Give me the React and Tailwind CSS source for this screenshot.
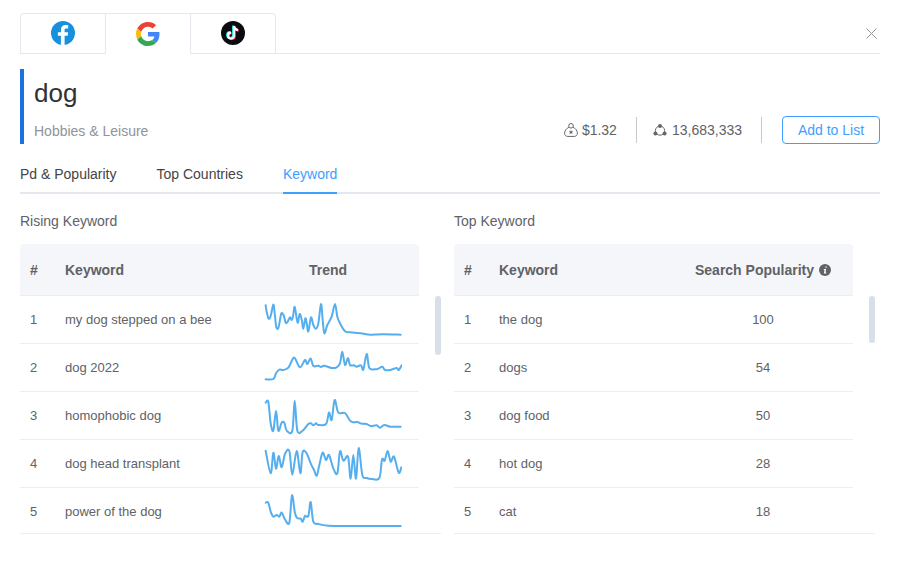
const font = { fontFamily: '"Liberation Sans", Arial, sans-serif' };

const rising = [
  {
    name: "my dog stepped on a bee",
    view: "36 30 420 120",
    points:
      "47,46 50,65 56,86 62,78 70,44 74,70 79,112 85,114 90,90 94,70 101,76 107,98 113,95 120,82 125,90 129,80 134,50 140,85 144,98 149,72 155,88 160,116 166,85 170,100 175,124 183,82 190,105 198,116 205,100 213,42 218,90 223,130 232,105 245,80 255,42 262,80 270,100 285,124 300,127 340,131 360,134 400,133 452,134",
  },
  {
    name: "dog 2022",
    view: "36 174 420 120",
    points:
      "47,268 70,267 78,250 88,239 100,240 115,233 128,207 135,205 150,232 165,210 172,222 182,205 190,228 205,227 213,231 222,227 245,234 260,232 270,220 277,186 285,225 294,204 300,225 312,226 320,230 333,226 340,239 350,192 358,234 375,238 385,236 397,230 405,240 420,240 440,234 446,240 455,226",
  },
  {
    name: "homophobic dog",
    view: "36 18 420 120",
    points:
      "47,38 55,36 62,100 70,122 78,62 85,122 95,98 103,98 110,122 127,122 134,32 142,122 158,122 175,102 183,100 190,106 198,100 205,105 228,102 237,68 245,90 254,30 265,68 285,69 300,92 310,97 322,96 335,101 350,102 362,108 380,106 390,113 403,105 420,110 440,110 452,110",
  },
  {
    name: "dog head transplant",
    view: "36 162 420 120",
    points:
      "47,182 62,250 70,188 78,236 86,198 95,232 105,192 118,183 127,254 140,183 151,250 158,186 170,190 182,220 192,240 200,257 208,225 218,188 228,210 237,195 250,235 262,250 270,184 280,212 294,200 302,266 310,195 318,266 326,174 337,255 350,264 365,267 388,264 396,208 404,212 413,183 422,215 432,200 446,248 454,232",
  },
  {
    name: "power of the dog",
    view: "36 306 420 120",
    points:
      "47,338 55,338 62,365 70,380 80,375 88,380 95,368 105,388 118,398 126,316 135,370 142,384 152,386 158,395 165,378 175,378 182,336 190,395 205,402 235,407 300,408 360,408 452,408",
  },
];

const top = [
  { name: "the dog", value: 100 },
  { name: "dogs", value: 54 },
  { name: "dog food", value: 50 },
  { name: "hot dog", value: 28 },
  { name: "cat", value: 18 },
];

// turns the traced points into a smooth line
const smoothPath = (points) => {
  const p = points.split(" ").map((s) => s.split(",").map(Number));
  let d = `M${p[0][0]} ${p[0][1]}`;
  for (let i = 0; i < p.length - 1; i++) {
    const a = p[Math.max(i - 1, 0)];
    const b = p[i];
    const c = p[i + 1];
    const e = p[Math.min(i + 2, p.length - 1)];
    const k = 6;
    d += `C${b[0] + (c[0] - a[0]) / k} ${b[1] + (c[1] - a[1]) / k} ${c[0] - (e[0] - b[0]) / k} ${c[1] - (e[1] - b[1]) / k} ${c[0]} ${c[1]}`;
  }
  return d;
};

const FacebookIcon = () => (
  <svg width="24" height="24" viewBox="0 0 24 24">
    <circle cx="12" cy="12" r="12" fill="#1791de" />
    <path
      d="M13.6 24v-9.2h3l.5-3.5h-3.5V9.2c0-1 .4-1.7 1.8-1.7h1.8V4.3c-.6-.1-1.6-.2-2.6-.2-2.8 0-4.6 1.6-4.6 4.6v2.6H6.9v3.5H9.9V24z"
      fill="#fff"
    />
  </svg>
);

const GoogleIcon = () => (
  <svg width="24" height="24" viewBox="0 0 48 48">
    <path fill="#EA4335" d="M24 9.5c3.54 0 6.71 1.22 9.21 3.6l6.85-6.85C35.9 2.38 30.47 0 24 0 14.62 0 6.51 5.38 2.56 13.22l7.98 6.19C12.43 13.72 17.74 9.5 24 9.5z" />
    <path fill="#4285F4" d="M46.98 24.55c0-1.57-.15-3.09-.38-4.55H24v9.02h12.94c-.58 2.96-2.26 5.48-4.78 7.18l7.73 6c4.51-4.18 7.09-10.36 7.09-17.65z" />
    <path fill="#FBBC05" d="M10.53 28.59c-.48-1.45-.76-2.99-.76-4.59s.27-3.14.76-4.59l-7.98-6.19C.92 16.46 0 20.12 0 24c0 3.88.92 7.54 2.56 10.78l7.97-6.19z" />
    <path fill="#34A853" d="M24 48c6.48 0 11.93-2.13 15.89-5.81l-7.73-6c-2.15 1.45-4.92 2.3-8.16 2.3-6.26 0-11.57-4.22-13.47-9.91l-7.98 6.19C6.51 42.62 14.62 48 24 48z" />
  </svg>
);

const note = "M13 5v9.6a3 3 0 1 1-3-3M13 5.2c.3 2.2 1.8 3.7 4 4";

const TiktokIcon = () => (
  <svg width="24" height="24" viewBox="0 0 24 24" fill="none" strokeWidth="2.2">
    <circle cx="12" cy="12" r="12" fill="#0b0b12" />
    <path d={note} stroke="#25f4ee" transform="translate(-.8 -.5)" />
    <path d={note} stroke="#fe2c55" transform="translate(.8 .5)" />
    <path d={note} stroke="#fff" />
  </svg>
);

const BagIcon = () => (
  <svg width="14" height="14" viewBox="0 0 14 14" fill="none" stroke="#666" strokeWidth="1">
    <circle cx="7" cy="2.8" r="2.3" />
    <path d="M4.9 4.2C2.6 5.4.6 7.6.6 10.2c0 2 1.3 3.2 3.2 3.2h6.4c1.9 0 3.2-1.2 3.2-3.2 0-2.6-2-4.8-4.3-6" />
    <path d="M7 7.4v3.6M5.4 8.3l3.2 1.8M8.6 8.3l-3.2 1.8" />
  </svg>
);

const CircleIcon = () => (
  <svg width="14" height="14" viewBox="0 0 14 14" fill="none" stroke="#666" strokeWidth="1">
    <circle cx="7" cy="7.6" r="4.6" />
    <circle cx="7" cy="3" r="2" fill="#666" stroke="none" />
    <circle cx="2.4" cy="10.6" r="2" fill="#666" stroke="none" />
    <circle cx="11.6" cy="10.6" r="2" fill="#666" stroke="none" />
  </svg>
);

const Sparkline = ({ view, points }) => (
  <svg width="140" height="40" viewBox={view} fill="none">
    <path
      d={smoothPath(points)}
      stroke="#55aeee"
      strokeWidth="6"
      strokeLinejoin="round"
      strokeLinecap="round"
    />
  </svg>
);

const RowList = ({ rows, cols, renderLast }) => (
  <div className="w-[399px]">
    {rows.map((row, i) => (
      <div
        key={row.name}
        className={`grid h-[48px] ${cols} items-center border-b border-[#ebeef5] text-[13px] text-[#606266]`}
      >
        <span className="pl-[10px]">{i + 1}</span>
        <span>{row.name}</span>
        {renderLast(row)}
      </div>
    ))}
  </div>
);

const App = () => {
  return (
    <div className="h-[586px] w-[897px] overflow-hidden bg-white pl-[20px] pr-[17px] pt-[13px]" style={font}>
      <div className="flex h-[41px] w-[860px] items-center justify-between border-b border-[#e4e7ed]">
        <div className="flex h-[41px]">
          <div className="flex h-[41px] w-[86px] items-center justify-center rounded-tl border border-[#e4e7ed]">
            <FacebookIcon />
          </div>
          <div className="-ml-px flex h-[41px] w-[86px] items-center justify-center border border-b-0 border-[#e4e7ed] bg-white">
            <GoogleIcon />
          </div>
          <div className="-ml-px flex h-[41px] w-[86px] items-center justify-center rounded-tr border border-[#e4e7ed]">
            <TiktokIcon />
          </div>
        </div>
        <svg className="mr-[3px]" width="11" height="11" viewBox="0 0 11 11" stroke="#909399" strokeWidth="1">
          <path d="M.5.5l10 10M10.5.5l-10 10" />
        </svg>
      </div>

      <div className="mt-[15px] flex h-[75px] w-[860px] items-end justify-between">
        <div className="h-[75px] border-l-4 border-[#1a73e0] pl-[10px]">
          <div className="mt-[6px] text-[26px] leading-[36px] text-[#303133]">dog</div>
          <div className="mt-[11px] text-[14px] leading-[18px] text-[#909399]">Hobbies &amp; Leisure</div>
        </div>
        <div className="flex h-[28px] items-center text-[14px] text-[#606266]">
          <BagIcon />
          <span className="ml-[4px]">$1.32</span>
          <span className="ml-[19px] mr-[16px] h-[26px] w-px bg-[#c8c9cc]"></span>
          <CircleIcon />
          <span className="ml-[5px]">13,683,333</span>
          <span className="ml-[19px] mr-[20px] h-[26px] w-px bg-[#c8c9cc]"></span>
          <button className="box-border h-[28px] w-[98px] rounded border border-[#409eff] pt-px text-[14px] text-[#409eff]">
            Add to List
          </button>
        </div>
      </div>

      <div className="mt-[10px] box-border flex h-[40px] w-[860px] border-b-2 border-[#e4e7ed] text-[14px] text-[#444]">
        <div className="flex h-[38px] items-center pt-[2px]">Pd &amp; Popularity</div>
        <div className="ml-[40px] flex h-[38px] items-center pt-[2px]">Top Countries</div>
        <div className="ml-[40px] box-content flex h-[38px] items-center border-b-2 border-[#409eff] text-[#409eff]">
          <span className="pt-[2px]">Keyword</span>
        </div>
      </div>

      <div className="mt-[17px] flex gap-[13px]">
        <div className="w-[421px]">
          <div className="h-[20px] text-[14px] leading-[20px] text-[#606266]">Rising Keyword</div>
          <div className="relative mt-[13px] h-[290px] overflow-hidden border-b border-[#ebeef5]">
            <div className="grid h-[52px] w-[399px] grid-cols-[45px_172px_182px] items-center rounded-t border-b border-[#ebeef5] bg-[#f5f6fa] pt-[2px] text-[14px] font-bold text-[#606266]">
              <span className="pl-[10px]">#</span>
              <span>Keyword</span>
              <span className="text-center">Trend</span>
            </div>
            <RowList
              rows={rising}
              cols="grid-cols-[45px_172px_182px]"
              renderLast={(row) => (
                <div className="pl-[25px]">
                  <Sparkline view={row.view} points={row.points} />
                </div>
              )}
            />
            <div className="absolute right-0 top-[52px] h-[59px] w-[6px] rounded-[3px] bg-[#d9dfe9]"></div>
          </div>
        </div>
        <div className="w-[421px]">
          <div className="h-[20px] text-[14px] leading-[20px] text-[#606266]">Top Keyword</div>
          <div className="relative mt-[13px] h-[290px] overflow-hidden border-b border-[#ebeef5]">
            <div className="grid h-[52px] w-[399px] grid-cols-[45px_174px_180px] items-center rounded-t border-b border-[#ebeef5] bg-[#f5f6fa] pt-[2px] text-[14px] font-bold text-[#606266]">
              <span className="pl-[10px]">#</span>
              <span>Keyword</span>
              <span className="flex items-center justify-center gap-[5px]">
                Search Popularity
                <svg className="-mt-[2px]" width="12" height="12" viewBox="0 0 13 13">
                  <circle cx="6.5" cy="6.5" r="6.5" fill="#606266" />
                  <path d="M6.9 2.6h1.4v1.5H6.9zM5.2 5.4h2.6L7 9.3h.9v1.1H5.2l.8-3.9h-.8z" fill="#fff" />
                </svg>
              </span>
            </div>
            <RowList
              rows={top}
              cols="grid-cols-[45px_174px_180px]"
              renderLast={(row) => <span className="text-center">{row.value}</span>}
            />
            <div className="absolute right-0 top-[52px] h-[47px] w-[6px] rounded-[3px] bg-[#d9dfe9]"></div>
          </div>
        </div>
      </div>
    </div>
  );
};

export default App;
